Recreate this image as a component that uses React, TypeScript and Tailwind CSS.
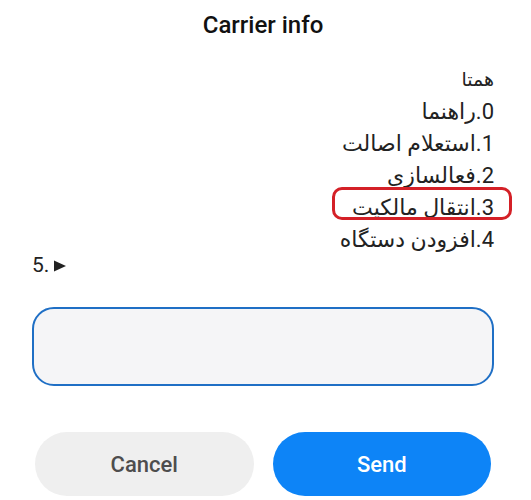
const items = ['0.راهنما', '1.استعلام اصالت', '2.فعالسازی', '3.انتقال مالکیت', '4.افزودن دستگاه'];

export default function App() {
  return (
    <div className="w-[531px] h-[500px] overflow-hidden bg-white pl-[32px] pr-[37px] font-['Roboto','DejaVu_Sans',sans-serif] text-[#222]">
      <h2 className="pt-[9px] text-center text-[24px] leading-[32px] font-medium text-[#111]">Carrier info</h2>

      <div className="mt-[23px]">
        <p dir="rtl" className="text-right text-[19px] leading-[32px]">همتا</p>
        {items.map((item, i) => (
          <p key={i} dir="rtl" className="relative text-right text-[22px] leading-[32px]">
            {item}
            {i === 3 && (
              <span className="absolute left-[300px] top-[-5px] w-[180px] h-[33px] rounded-[10px] border-[3px] border-[#d42027]" />
            )}
          </p>
        ))}
        <p dir="ltr" className="mt-[-4px] flex items-center gap-[5px] text-[21px] leading-[26px]">
          <span>5.</span>
          <svg width="12" height="12" viewBox="0 0 12 12" className="mt-[1px]">
            <polygon points="0,0.5 12,6 0,11.5" fill="#222" />
          </svg>
        </p>
      </div>

      <div className="mt-[29px] h-[79px] w-full rounded-[22px] border-2 border-[#1f6fc5] bg-[#f5f5f7]" />

      <div className="mt-[46px] flex gap-[19px] px-[3px]">
        <button className="h-[64px] flex-1 rounded-full bg-[#efefef] text-[22px] font-medium text-[#4d4d4d]">Cancel</button>
        <button className="h-[64px] flex-1 rounded-full bg-[#0d84f7] text-[22px] font-medium text-white">Send</button>
      </div>
    </div>
  );
}
